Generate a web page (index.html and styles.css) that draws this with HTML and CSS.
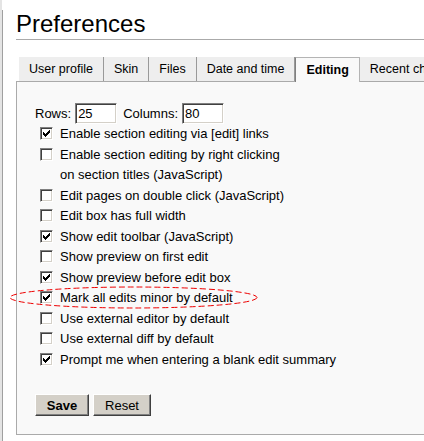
FILE: index.html
```html
<!DOCTYPE html>
<html>
<head>
<meta charset="utf-8">
<link rel="stylesheet" href="styles.css">
</head>
<body>
<div class="page">
  <h1 class="title">Preferences</h1>
  <ul class="tabs">
    <li class="tab">User profile</li>
    <li class="tab">Skin</li>
    <li class="tab">Files</li>
    <li class="tab">Date and time</li>
    <li class="tab sel">Editing</li>
    <li class="tab">Recent changes</li>
  </ul>
  <div class="panel">
    <div class="dims">
      <span>Rows:</span><input class="num" type="text" value="25" readonly>
      <span class="gap">Columns:</span><input class="num" type="text" value="80" readonly>
    </div>
    <ul class="opts">
      <li class="opt"><span class="cb on"><svg viewBox="0 0 7 7" width="7" height="7"><path d="M0 2h1v3H0zM1 3h1v3H1zM2 4h1v3H2zM3 3h1v3H3zM4 2h1v3H4zM5 1h1v3H5zM6 0h1v3H6z"/></svg></span><span class="lbl">Enable section editing via [edit] links</span></li>
      <li class="opt"><span class="cb"></span><span class="lbl">Enable section editing by right clicking<br>on section titles (JavaScript)</span></li>
      <li class="opt"><span class="cb"></span><span class="lbl">Edit pages on double click (JavaScript)</span></li>
      <li class="opt"><span class="cb"></span><span class="lbl">Edit box has full width</span></li>
      <li class="opt"><span class="cb on"><svg viewBox="0 0 7 7" width="7" height="7"><path d="M0 2h1v3H0zM1 3h1v3H1zM2 4h1v3H2zM3 3h1v3H3zM4 2h1v3H4zM5 1h1v3H5zM6 0h1v3H6z"/></svg></span><span class="lbl">Show edit toolbar (JavaScript)</span></li>
      <li class="opt"><span class="cb"></span><span class="lbl">Show preview on first edit</span></li>
      <li class="opt"><span class="cb on"><svg viewBox="0 0 7 7" width="7" height="7"><path d="M0 2h1v3H0zM1 3h1v3H1zM2 4h1v3H2zM3 3h1v3H3zM4 2h1v3H4zM5 1h1v3H5zM6 0h1v3H6z"/></svg></span><span class="lbl">Show preview before edit box</span></li>
      <li class="opt"><span class="cb on"><svg viewBox="0 0 7 7" width="7" height="7"><path d="M0 2h1v3H0zM1 3h1v3H1zM2 4h1v3H2zM3 3h1v3H3zM4 2h1v3H4zM5 1h1v3H5zM6 0h1v3H6z"/></svg></span><span class="lbl">Mark all edits minor by default</span></li>
      <li class="opt"><span class="cb"></span><span class="lbl">Use external editor by default</span></li>
      <li class="opt"><span class="cb"></span><span class="lbl">Use external diff by default</span></li>
      <li class="opt"><span class="cb on"><svg viewBox="0 0 7 7" width="7" height="7"><path d="M0 2h1v3H0zM1 3h1v3H1zM2 4h1v3H2zM3 3h1v3H3zM4 2h1v3H4zM5 1h1v3H5zM6 0h1v3H6z"/></svg></span><span class="lbl">Prompt me when entering a blank edit summary</span></li>
    </ul>
    <div class="actions">
      <button class="btn save" type="button">Save</button>
      <button class="btn reset" type="button">Reset</button>
    </div>
  </div>
</div>
<svg class="mark" width="252" height="26" viewBox="0 0 252 26">
  <ellipse cx="125.5" cy="12.5" rx="123.5" ry="10.5" fill="none" stroke="#ee0000" stroke-width="1" stroke-dasharray="6 3"/>
</svg>
</body>
</html>
```
FILE: styles.css
```css
html, body {
  margin: 0;
  padding: 0;
}
body {
  background: #fff;
  color: #000;
  font-family: "Liberation Sans", Arial, sans-serif;
  border-left: 2px solid #e4e4e4;
  height: 441px;
  box-sizing: border-box;
  overflow: hidden;
  position: relative;
}
.page {
  border-left: 1px solid #a0a0a0;
  padding-left: 13px;
  width: 700px;
  min-height: 441px;
  box-sizing: border-box;
}
.title {
  margin: 10px 0 0;
  font-size: 24px;
  font-weight: normal;
  line-height: 28px;
  padding-bottom: 1px;
  border-bottom: 1px solid #aaa;
}
.tabs {
  list-style: none;
  margin: 17px 0 0 3px;
  padding: 0;
  display: flex;
  height: 24px;
  white-space: nowrap;
}
.tab {
  background: #eeeeee;
  border-right: 1px solid #999;
  padding: 0 10px;
  font-size: 12.5px;
  line-height: 24px;
}
.tab.sel {
  background: #f9f9f9;
  border: 1px solid #b4b4b4;
  border-left-color: #808080;
  border-bottom: 0;
  margin-bottom: -1px;
  font-weight: bold;
  position: relative;
  z-index: 1;
}
.panel {
  border: 1px solid #aaa;
  background: #f9f9f9;
  padding: 20px 0 18px 18px;
}
.dims {
  display: flex;
  align-items: center;
  height: 22px;
  font-size: 13px;
}
.num {
  width: 42px;
  height: 21px;
  box-sizing: border-box;
  margin: 0 0 0 4px;
  padding: 0 0 0 2px;
  font: 13px "Liberation Sans", Arial, sans-serif;
  color: #000;
  background: #fff;
  border: 1px solid;
  border-color: #808080 #ffffff #ffffff #808080;
  box-shadow: inset 1px 1px #404040, inset -1px -1px #d4d0c8;
  outline: none;
}
.gap {
  margin-left: 6px;
}
.opts {
  list-style: none;
  margin: 0;
  padding: 0 0 0 5px;
  font-size: 13px;
  line-height: 20.5px;
}
.opt {
  display: flex;
  align-items: flex-start;
}
.cb {
  flex: none;
  width: 13px;
  height: 13px;
  box-sizing: border-box;
  margin: 3px 7px 0 0;
  background: #fff;
  border: 1px solid;
  border-color: #808080 #ffffff #ffffff #808080;
  box-shadow: inset 1px 1px #404040, inset -1px -1px #d4d0c8;
  display: flex;
  align-items: flex-start;
  justify-content: flex-start;
}
.cb svg {
  display: block;
  margin: 2px 0 0 2px;
  fill: #000;
  shape-rendering: crispEdges;
}
.actions {
  display: flex;
  gap: 4px;
  margin-top: 24px;
}
.btn {
  height: 22px;
  box-sizing: border-box;
  padding: 0;
  margin: 0;
  font: 13px "Liberation Sans", Arial, sans-serif;
  color: #000;
  background: #d4d0c8;
  border: 1px solid;
  border-color: #ffffff #404040 #404040 #ffffff;
  box-shadow: inset -1px -1px #808080;
}
.save {
  width: 54px;
  font-weight: bold;
}
.reset {
  width: 58px;
}
.mark {
  position: absolute;
  left: 6px;
  top: 285px;
}
```
